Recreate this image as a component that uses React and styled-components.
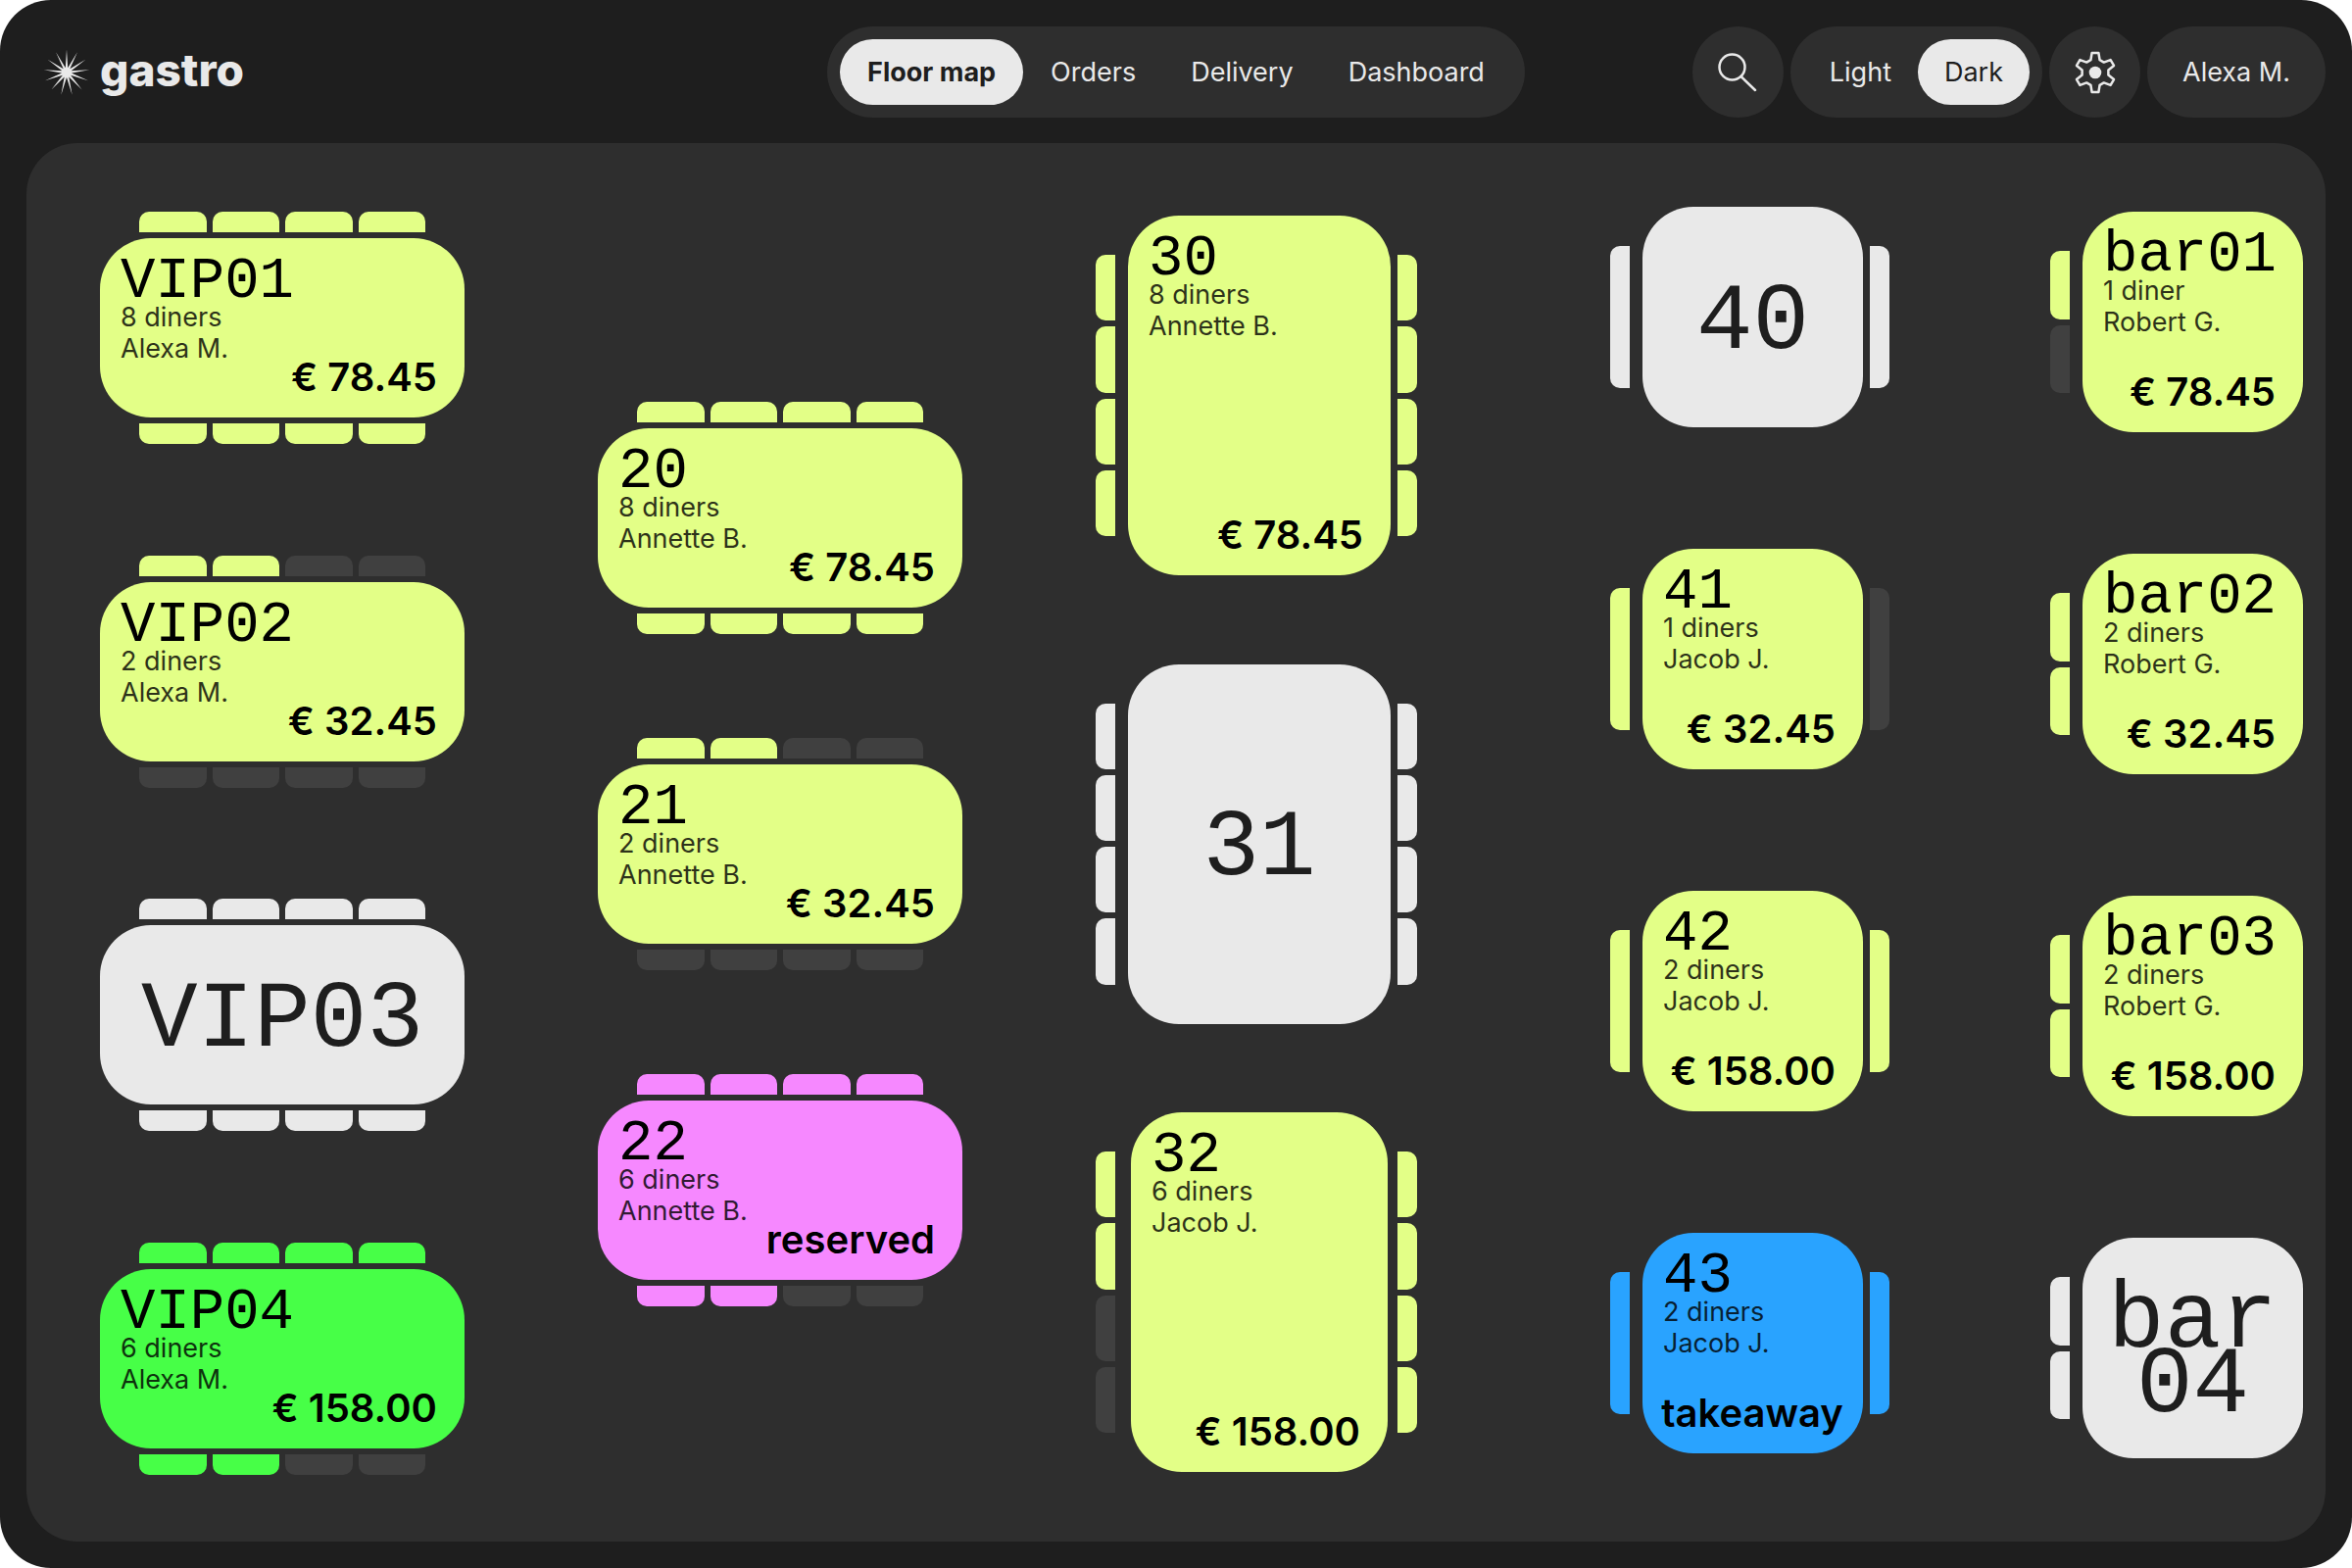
import React from "react";
import styled, { createGlobalStyle, css } from "styled-components";

const color = {
  page: "#1e1e1e",
  panel: "#2e2e2e",
  light: "#e9e9e9",
  vacant: "#404040",
  lime: "#e3ff87",
  green: "#47ff47",
  pink: "#f688ff",
  blue: "#29a3ff",
};

const sans = '"Inter", "Liberation Sans", sans-serif';
const mono = '"Liberation Mono", "DejaVu Sans Mono", monospace';

const GlobalStyle = createGlobalStyle`
  *, *::before, *::after { box-sizing: border-box; }
  body { margin: 0; background: #fff; font-family: ${sans}; }
  button { font: inherit; border: 0; cursor: pointer; }
  ul, h2, p { margin: 0; padding: 0; list-style: none; font-weight: inherit; }
`;

const Shell = styled.div`
  min-height: 100vh;
  display: flex;
  flex-direction: column;
  gap: 26px;
  padding: 27px;
  border-radius: 52px;
  background: ${color.page};
  color: ${color.light};
  font-size: 27px;
  line-height: 32px;
`;

const Header = styled.header`
  display: grid;
  grid-template-columns: 1fr auto 1fr;
  align-items: center;
`;

const Brand = styled.a`
  display: flex;
  align-items: center;
  gap: 10px;
  padding-left: 17px;
  color: inherit;
  text-decoration: none;
`;

const BrandName = styled.span`
  padding-bottom: 5px;
  font-size: 46px;
  font-weight: 800;
  line-height: 48px;
`;

const Capsule = styled.div`
  display: flex;
  align-items: center;
  height: 93px;
  padding: 13px;
  border-radius: 47px;
  background: ${color.panel};
`;

const selectedItem = css`
  background: ${color.light};
  color: ${color.page};
`;

const NavLink = styled.a`
  display: flex;
  align-items: center;
  height: 67px;
  padding: 0 28px;
  border-radius: 34px;
  color: inherit;
  text-decoration: none;
  ${(p) => p.$active && css`${selectedItem} font-weight: 700;`}
`;

const Tools = styled.div`
  display: flex;
  justify-content: flex-end;
  gap: 7px;
`;

const ModeButton = styled.button`
  height: 67px;
  padding: 0 27px;
  border-radius: 34px;
  background: none;
  color: inherit;
  ${(p) => p.$active && selectedItem}
`;

const RoundButton = styled.button`
  display: grid;
  place-items: center;
  width: 93px;
  height: 93px;
  padding: 0;
  border-radius: 50%;
  background: ${color.panel};
  color: inherit;
`;

const UserButton = styled.button`
  height: 93px;
  padding: 0 36px;
  border-radius: 47px;
  background: ${color.panel};
  color: inherit;
`;

const Floor = styled.main`
  flex: 1;
  display: grid;
  grid-template-columns: 508fr 508fr 525fr 449fr auto;
  padding: 64px 23px 68px 75px;
  border-radius: 52px;
  background: ${color.panel};
`;

const Zone = styled.ul`
  display: flex;
  flex-direction: column;
  align-items: flex-start;
  justify-content: ${(p) => (p.$gap ? "flex-start" : "space-between")};
  gap: ${(p) => p.$gap || 0}px;
  padding: ${(p) => p.$inset};
`;

const Unit = styled.li`
  display: flex;
  flex-direction: ${(p) => (p.$wide ? "column" : "row")};
  gap: ${(p) => (p.$wide ? 6 : 0)}px;
`;

const seatCorners = {
  top: "10px 10px 0 0",
  bottom: "0 0 10px 10px",
  left: "10px 0 0 10px",
  right: "0 10px 10px 0",
};

const Seats = styled.div`
  display: flex;
  gap: 6px;
  ${(p) =>
    p.$side === "top" || p.$side === "bottom"
      ? css`height: 21px; padding: 0 40px;`
      : css`flex-direction: column; width: 20px; padding: 40px 0;`}
`;

const Seat = styled.span`
  flex: 1;
  border-radius: ${(p) => seatCorners[p.$side]};
  background: ${(p) => color[p.$tone]};
`;

const sizes = {
  wide: css`width: 372px; height: 183px;`,
  tall: css`width: 268px; height: 367px; margin: 0 7px 0 13px;`,
  slim: css`width: 262px; height: 367px; margin: 0 10px 0 16px;`,
  square: css`width: 225px; height: 225px; margin: 0 7px 0 13px;`,
  bar: css`width: 225px; height: 225px; margin-left: 13px;`,
};

const Card = styled.article`
  ${(p) => sizes[p.$shape]}
  display: flex;
  flex-direction: column;
  padding: 25px 22px 29px 21px;
  border-radius: 52px;
  background: ${(p) => color[p.$tone]};
  color: #000;
`;

const FreeCard = styled(Card)`
  align-items: center;
  justify-content: center;
  padding: 12px 0 0;
  color: ${color.page};
`;

const FreeNumber = styled.h2`
  font-family: ${mono};
  font-size: 96px;
  line-height: 66px;
  text-align: center;
  white-space: pre-line;
`;

const TableNumber = styled.h2`
  font-family: ${mono};
  font-size: 59px;
  line-height: 40px;
`;

const Detail = styled.p`
  opacity: 0.8;
`;

const Total = styled.p`
  margin-top: auto;
  padding-right: 6px;
  align-self: flex-end;
  font-size: 40px;
  font-weight: 600;
  line-height: 24px;
  white-space: nowrap;
`;

const Status = styled(Total)`
  ${(p) => p.$centered && css`align-self: center; padding-right: 0;`}
`;

function Burst() {
  const points = [];
  for (let i = 0; i < 13; i++) {
    const a = (i * 2 * Math.PI) / 13;
    const b = a + Math.PI / 13;
    points.push(`${24 + 23.5 * Math.sin(a)},${24 - 23.5 * Math.cos(a)}`);
    points.push(`${24 + 5 * Math.sin(b)},${24 - 5 * Math.cos(b)}`);
  }
  return (
    <svg width="48" height="48" viewBox="0 0 48 48" aria-hidden="true">
      <polygon points={points.join(" ")} fill="currentColor" />
    </svg>
  );
}

function SearchIcon() {
  return (
    <svg width="40" height="40" viewBox="0 0 40 40" fill="none" stroke="currentColor" strokeWidth="2.5" strokeLinecap="round" aria-hidden="true">
      <circle cx="14.5" cy="14.5" r="13" />
      <path d="M23.5 24 38 38" />
    </svg>
  );
}

const toothProfile = [
  [-4.6, -12.8],
  [-3.4, -20],
  [3.4, -20],
  [4.6, -12.8],
];

function GearIcon() {
  const points = [];
  for (let i = 0; i < 6; i++) {
    const a = (i * Math.PI) / 3;
    for (const [x, y] of toothProfile) {
      points.push(`${22 + x * Math.cos(a) - y * Math.sin(a)},${22 + x * Math.sin(a) + y * Math.cos(a)}`);
    }
  }
  return (
    <svg width="44" height="44" viewBox="0 0 44 44" aria-hidden="true">
      <polygon points={points.join(" ")} fill="none" stroke="currentColor" strokeWidth="2.5" strokeLinejoin="round" />
      <circle cx="22" cy="22" r="6.3" fill="currentColor" />
    </svg>
  );
}

function SeatRow({ side, pattern, tone }) {
  return (
    <Seats $side={side}>
      {[...pattern].map((s, i) => (
        <Seat key={i} $side={side} $tone={s === "1" ? tone : "vacant"} />
      ))}
    </Seats>
  );
}

function Table({ name, shape, tone = "lime", before, after, diners, waiter, total, status }) {
  const wide = shape === "wide";
  return (
    <Unit $wide={wide}>
      <SeatRow side={wide ? "top" : "left"} pattern={before} tone={tone} />
      {diners ? (
        <Card $shape={shape} $tone={tone}>
          <TableNumber>{name}</TableNumber>
          <Detail>{diners}</Detail>
          <Detail>{waiter}</Detail>
          {status ? <Status $centered={shape === "square"}>{status}</Status> : <Total>€ {total}</Total>}
        </Card>
      ) : (
        <FreeCard $shape={shape} $tone={tone}>
          <FreeNumber>{name}</FreeNumber>
        </FreeCard>
      )}
      {after && <SeatRow side={wide ? "bottom" : "right"} pattern={after} tone={tone} />}
    </Unit>
  );
}

const zones = [
  {
    inset: "6px 0 0",
    tables: [
      { name: "VIP01", shape: "wide", before: "1111", after: "1111", diners: "8 diners", waiter: "Alexa M.", total: "78.45" },
      { name: "VIP02", shape: "wide", before: "1100", after: "0000", diners: "2 diners", waiter: "Alexa M.", total: "32.45" },
      { name: "VIP03", shape: "wide", tone: "light", before: "1111", after: "1111" },
      { name: "VIP04", shape: "wide", tone: "green", before: "1111", after: "1100", diners: "6 diners", waiter: "Alexa M.", total: "158.00" },
    ],
  },
  {
    inset: "200px 0 0",
    gap: 106,
    tables: [
      { name: "20", shape: "wide", before: "1111", after: "1111", diners: "8 diners", waiter: "Annette B.", total: "78.45" },
      { name: "21", shape: "wide", before: "1100", after: "0000", diners: "2 diners", waiter: "Annette B.", total: "32.45" },
      { name: "22", shape: "wide", tone: "pink", before: "1111", after: "1100", diners: "6 diners", waiter: "Annette B.", status: "reserved" },
    ],
  },
  {
    inset: "10px 0 3px",
    tables: [
      { name: "30", shape: "tall", before: "1111", after: "1111", diners: "8 diners", waiter: "Annette B.", total: "78.45" },
      { name: "31", shape: "tall", tone: "light", before: "1111", after: "1111" },
      { name: "32", shape: "slim", before: "1100", after: "1111", diners: "6 diners", waiter: "Jacob J.", total: "158.00" },
    ],
  },
  {
    inset: "1px 0 22px",
    tables: [
      { name: "40", shape: "square", tone: "light", before: "1", after: "1" },
      { name: "41", shape: "square", before: "1", after: "0", diners: "1 diners", waiter: "Jacob J.", total: "32.45" },
      { name: "42", shape: "square", before: "1", after: "1", diners: "2 diners", waiter: "Jacob J.", total: "158.00" },
      { name: "43", shape: "square", tone: "blue", before: "1", after: "1", diners: "2 diners", waiter: "Jacob J.", status: "takeaway" },
    ],
  },
  {
    inset: "6px 0 17px",
    tables: [
      { name: "bar01", shape: "bar", before: "10", diners: "1 diner", waiter: "Robert G.", total: "78.45" },
      { name: "bar02", shape: "bar", before: "11", diners: "2 diners", waiter: "Robert G.", total: "32.45" },
      { name: "bar03", shape: "bar", before: "11", diners: "2 diners", waiter: "Robert G.", total: "158.00" },
      { name: "bar\n04", shape: "bar", tone: "light", before: "11" },
    ],
  },
];

const pages = ["Floor map", "Orders", "Delivery", "Dashboard"];

export default function App() {
  const [page, setPage] = React.useState("Floor map");
  const [mode, setMode] = React.useState("Dark");
  return (
    <>
      <GlobalStyle />
      <Shell>
        <Header>
          <Brand href="#home">
            <Burst />
            <BrandName>gastro</BrandName>
          </Brand>
          <Capsule as="nav">
            {pages.map((p) => (
              <NavLink key={p} href="#" $active={p === page} onClick={() => setPage(p)}>
                {p}
              </NavLink>
            ))}
          </Capsule>
          <Tools>
            <RoundButton aria-label="Search">
              <SearchIcon />
            </RoundButton>
            <Capsule role="group" aria-label="Theme">
              {["Light", "Dark"].map((m) => (
                <ModeButton key={m} $active={m === mode} aria-pressed={m === mode} onClick={() => setMode(m)}>
                  {m}
                </ModeButton>
              ))}
            </Capsule>
            <RoundButton aria-label="Settings">
              <GearIcon />
            </RoundButton>
            <UserButton>Alexa M.</UserButton>
          </Tools>
        </Header>
        <Floor>
          {zones.map((z, i) => (
            <Zone key={i} $inset={z.inset} $gap={z.gap}>
              {z.tables.map((t) => (
                <Table key={t.name} {...t} />
              ))}
            </Zone>
          ))}
        </Floor>
      </Shell>
    </>
  );
}
